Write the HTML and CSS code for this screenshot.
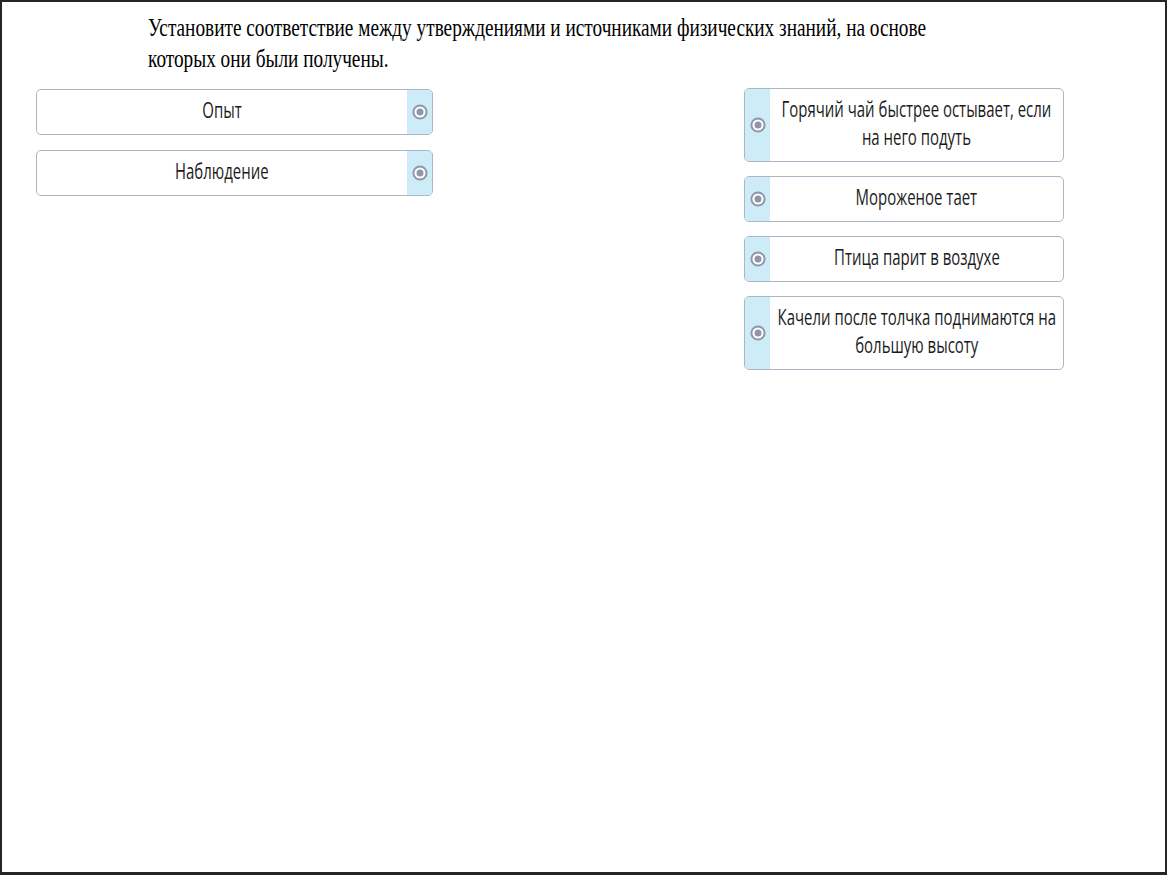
FILE: index.html
```html
<!DOCTYPE html>
<html lang="ru">
<head>
<meta charset="utf-8">
<title>Соответствие</title>
<link rel="stylesheet" href="styles.css">
</head>
<body>
<div class="frame">
  <div class="question"><span class="q-text">Установите соответствие между утверждениями и источниками физических знаний, на основе<br>которых они были получены.</span></div>
  <div class="columns">
    <div class="col col-left">
      <div class="item item-left">
        <div class="label"><span class="txt">Опыт</span></div>
        <div class="handle"><svg class="dot" viewBox="0 0 16 16" width="16" height="16"><circle cx="8" cy="8" r="6.6" fill="#fff" stroke="#8f96a8" stroke-width="2"/><circle cx="8" cy="8" r="3.5" fill="#8f96a8"/></svg></div>
      </div>
      <div class="item item-left">
        <div class="label"><span class="txt">Наблюдение</span></div>
        <div class="handle"><svg class="dot" viewBox="0 0 16 16" width="16" height="16"><circle cx="8" cy="8" r="6.6" fill="#fff" stroke="#8f96a8" stroke-width="2"/><circle cx="8" cy="8" r="3.5" fill="#8f96a8"/></svg></div>
      </div>
    </div>
    <div class="col col-right">
      <div class="item item-right">
        <div class="handle"><svg class="dot" viewBox="0 0 16 16" width="16" height="16"><circle cx="8" cy="8" r="6.6" fill="#fff" stroke="#8f96a8" stroke-width="2"/><circle cx="8" cy="8" r="3.5" fill="#8f96a8"/></svg></div>
        <div class="label"><span class="txt">Горячий чай быстрее остывает, если<br>на него подуть</span></div>
      </div>
      <div class="item item-right">
        <div class="handle"><svg class="dot" viewBox="0 0 16 16" width="16" height="16"><circle cx="8" cy="8" r="6.6" fill="#fff" stroke="#8f96a8" stroke-width="2"/><circle cx="8" cy="8" r="3.5" fill="#8f96a8"/></svg></div>
        <div class="label"><span class="txt">Мороженое тает</span></div>
      </div>
      <div class="item item-right">
        <div class="handle"><svg class="dot" viewBox="0 0 16 16" width="16" height="16"><circle cx="8" cy="8" r="6.6" fill="#fff" stroke="#8f96a8" stroke-width="2"/><circle cx="8" cy="8" r="3.5" fill="#8f96a8"/></svg></div>
        <div class="label"><span class="txt">Птица парит в воздухе</span></div>
      </div>
      <div class="item item-right">
        <div class="handle"><svg class="dot" viewBox="0 0 16 16" width="16" height="16"><circle cx="8" cy="8" r="6.6" fill="#fff" stroke="#8f96a8" stroke-width="2"/><circle cx="8" cy="8" r="3.5" fill="#8f96a8"/></svg></div>
        <div class="label"><span class="txt">Качели после толчка поднимаются на<br>большую высоту</span></div>
      </div>
    </div>
  </div>
</div>
</body>
</html>
```

FILE: styles.css
```css
html, body {
  margin: 0;
  padding: 0;
  background: #fff;
}
.frame {
  box-sizing: border-box;
  width: 1167px;
  height: 875px;
  border: 2px solid #262626;
  border-bottom-width: 3px;
  overflow: hidden;
}
.question {
  padding: 10px 0 0 146px;
  height: 76px;
  box-sizing: border-box;
}
.q-text {
  display: inline-block;
  white-space: nowrap;
  font-family: "Liberation Serif", "Times New Roman", serif;
  font-size: 25px;
  line-height: 31px;
  color: #000;
  transform: scaleX(0.771);
  transform-origin: left top;
}
.columns {
  display: flex;
  align-items: flex-start;
  padding-left: 34px;
  gap: 311px;
}
.col {
  display: flex;
  flex-direction: column;
}
.col-left {
  width: 397px;
  gap: 15px;
  margin-top: 11px;
}
.col-right {
  width: 320px;
  gap: 14px;
  margin-top: 10px;
}
.item {
  display: flex;
  box-sizing: border-box;
  border: 1px solid #aeb5c6;
  border-radius: 5px;
  overflow: hidden;
  background: #fff;
}
.label {
  flex: 1;
  min-width: 0;
  display: flex;
  justify-content: center;
  align-items: center;
  padding: 5px 4px 11px;
  text-align: center;
}
.txt {
  display: inline-block;
  flex: none;
  white-space: nowrap;
  font-family: "Open Sans", "Noto Sans", sans-serif;
  font-size: 22px;
  line-height: 28px;
  color: #1b1b1b;
  transform: scaleX(0.68);
  transform-origin: center;
}
.handle {
  width: 25px;
  flex: none;
  background: #cdecf8;
  display: flex;
  align-items: center;
  justify-content: center;
}
.dot {
  display: block;
}
```
